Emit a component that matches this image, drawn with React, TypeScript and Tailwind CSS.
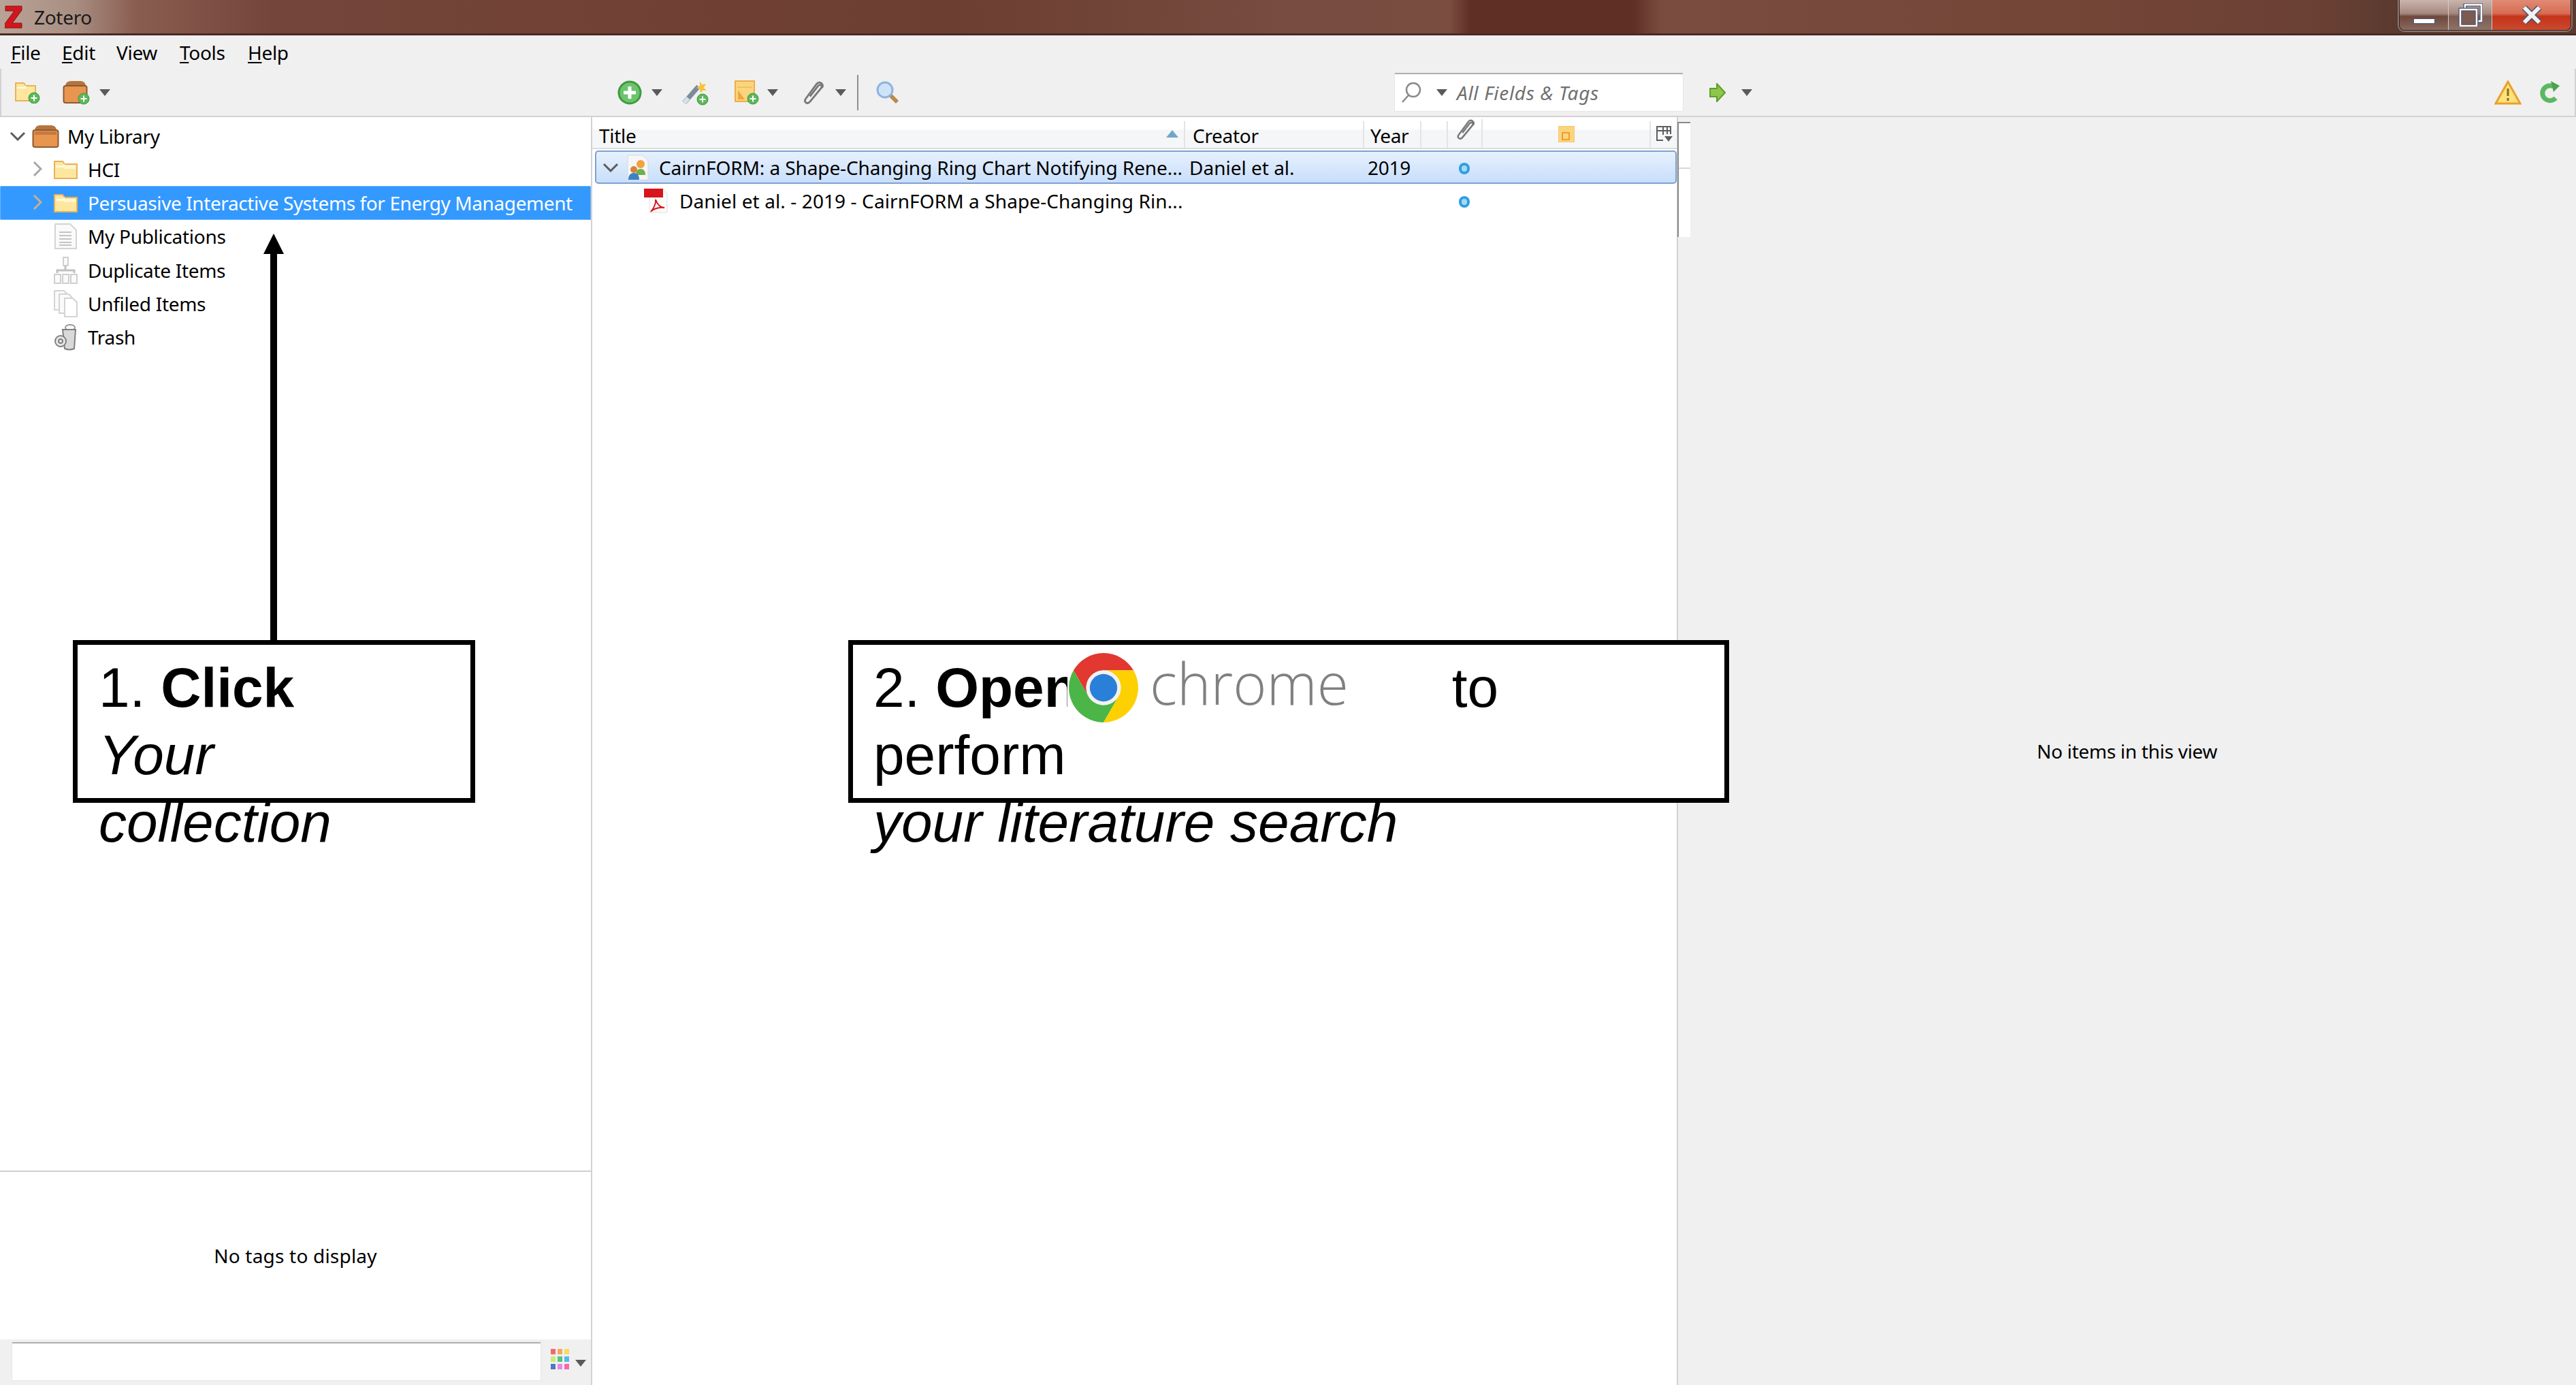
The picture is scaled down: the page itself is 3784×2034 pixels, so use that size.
const Caret = ({ className = '' }: { className?: string }) => (
  <svg viewBox="0 0 16 10" className={`w-[16px] h-[10px] ${className}`}>
    <path d="M0 0h16L8 10z" fill="#5a5a5a" />
  </svg>
);

const Chevron = ({ open, light, className = '' }: { open?: boolean; light?: boolean; className?: string }) =>
  open ? (
    <svg viewBox="0 0 24 14" className={`w-[24px] h-[14px] ${className}`}>
      <path d="M2 2l10 10L22 2" fill="none" stroke="#5c5c5c" strokeWidth="3" />
    </svg>
  ) : (
    <svg viewBox="0 0 14 22" className={`w-[14px] h-[22px] ${className}`}>
      <path d="M2 1l10 10L2 21" fill="none" stroke={light ? '#c8b090' : '#a8a8a8'} strokeWidth="3" />
    </svg>
  );

const PlusBadge = ({ cx, cy, r = 6 }: { cx: number; cy: number; r?: number }) => (
  <g>
    <circle cx={cx} cy={cy} r={r} fill="#5cb85c" stroke="#3f9a3f" />
    <path d={`M${cx - r * 0.55} ${cy}h${r * 1.1}M${cx} ${cy - r * 0.55}v${r * 1.1}`} stroke="#fff" strokeWidth="2" />
  </g>
);

const Folder = ({ className = '' }: { className?: string }) => (
  <svg viewBox="0 0 35 28" className={`w-[35px] h-[28px] ${className}`}>
    <path d="M1 2h12l3 4h18v21H1z" fill="#fde79f" stroke="#e8b25c" strokeWidth="2" />
    <path d="M3 8h10l3-3v6H3z" fill="#fff9e2" />
    <path d="M16 8h16v5H16z" fill="#fff6d0" />
  </svg>
);

const Box = ({ className = '' }: { className?: string }) => (
  <svg viewBox="0 0 40 34" className={className}>
    <path d="M4 8Q5 1 12 1h16q7 0 8 7z" fill="#b5743f" />
    <rect x="1.5" y="8" width="37" height="25" rx="3" fill="#e8954f" stroke="#8d5a30" strokeWidth="2" />
    <rect x="4" y="10" width="32" height="5" fill="#c67b3f" />
  </svg>
);

const Paperclip = ({ className = '' }: { className?: string }) => (
  <svg viewBox="0 0 24 24" className={className}>
    <path
      d="M9 16L17.500 5c2-2.500 5 0 3 2.500L9 21.500c-2.500 3-7 .5-4.500-3L16 3c3-3.500 8 0 5.500 4"
      fill="none"
      stroke="#787878"
      strokeWidth="2"
    />
  </svg>
);

const GreyPage = () => (
  <svg viewBox="0 0 35 40" className="w-[35px] h-[40px]">
    <path d="M2 2h22l9 9v27H2z" fill="#fafafa" stroke="#d4d4d4" strokeWidth="2" />
    <path d="M8 14h18M8 19h18M8 24h18M8 29h18M8 33h18" stroke="#c4c4c4" strokeWidth="2" />
  </svg>
);

const DuplicateIcon = () => (
  <svg viewBox="0 0 35 40" className="w-[35px] h-[40px]">
    <path d="M14 1h7v12h-7z" fill="#fafafa" stroke="#d0d0d0" strokeWidth="2" />
    <path d="M17 13v7M5 24v-4h25v4" fill="none" stroke="#c0c0c0" strokeWidth="3" />
    <path d="M1 26h9v13H1zM13 26h9v13h-9zM25 26h9v13h-9z" fill="#fafafa" stroke="#cfcfcf" strokeWidth="2" />
  </svg>
);

const UnfiledIcon = () => (
  <svg viewBox="0 0 35 40" className="w-[35px] h-[40px]">
    <path d="M1 1h14l4 4v24H1z" fill="#fafafa" stroke="#d4d4d4" strokeWidth="2" />
    <path d="M8 6h14l4 4v24H8z" fill="#fafafa" stroke="#d4d4d4" strokeWidth="2" />
    <path d="M16 12h12l6 6v21H16z" fill="#fff" stroke="#d4d4d4" strokeWidth="2" />
  </svg>
);

const TrashIcon = () => (
  <svg viewBox="0 0 35 40" className="w-[35px] h-[40px]">
    <ellipse cx="24" cy="6" rx="7" ry="4" fill="none" stroke="#9a9a9a" strokeWidth="2" />
    <path d="M13 9h19l-2 28q-7 3-14 0z" fill="#d9d9d9" stroke="#808080" strokeWidth="2" />
    <circle cx="10" cy="26" r="8" fill="#e8e8e8" stroke="#808080" strokeWidth="2" />
    <circle cx="10" cy="26" r="3" fill="none" stroke="#808080" strokeWidth="2" />
  </svg>
);

const ZoteroLogo = () => (
  <svg viewBox="0 0 26 34" className="w-[26px] h-[34px]">
    <path d="M1 1h24v6L11 26h14v7H0v-6L14 8H1z" fill="#d1171d" stroke="#8f1015" strokeWidth="1" />
  </svg>
);

const ChromeLogo = () => (
  <svg viewBox="0 0 100 100" className="w-[106px] h-[106px] shrink-0">
    <path d="M8.400 26A48 48 0 0 1 91.600 26H50A24 24 0 0 0 29.200 62Z" fill="#e2382f" />
    <path d="M8.400 26L29.200 62A24 24 0 0 0 70.800 62L50 98A48 48 0 0 1 8.400 26Z" fill="#4cb548" />
    <path d="M50 26H91.600A48 48 0 0 1 50 98L70.800 62A24 24 0 0 0 50 26Z" fill="#fdd000" />
    <circle cx="50" cy="50" r="24" fill="#f2f2f2" />
    <circle cx="50" cy="50" r="19" fill="#2a80d8" />
  </svg>
);

const menuItems = [
  { key: 'F', rest: 'ile', w: 'w-[75px]' },
  { key: 'E', rest: 'dit', w: 'w-[80px]' },
  { key: '', rest: 'View', w: 'w-[93px]' },
  { key: 'T', rest: 'ools', w: 'w-[100px]' },
  { key: 'H', rest: 'elp', w: 'w-[70px]' },
];

const collections = [
  { label: 'HCI', icon: <Folder />, chevron: true },
  { label: 'Persuasive Interactive Systems for Energy Management', icon: <Folder />, chevron: true, selected: true },
  { label: 'My Publications', icon: <GreyPage /> },
  { label: 'Duplicate Items', icon: <DuplicateIcon /> },
  { label: 'Unfiled Items', icon: <UnfiledIcon /> },
  { label: 'Trash', icon: <TrashIcon /> },
];

const Dot = ({ className = '' }: { className?: string }) => (
  <span className={`absolute left-[1273px] w-[16px] h-[17px] rounded-full border-[4px] border-[#2d9fe3] bg-[#a9d8f0] ${className}`} />
);

export default function App() {
  return (
    <div className="relative w-[3784px] h-[2034px] overflow-hidden flex flex-col bg-white text-black font-['Noto_Sans',sans-serif] text-[28px] tracking-[-0.3px]">
      {/* Title bar */}
      <header className="h-[52px] shrink-0 flex items-start border-b-[3px] border-[#4a2a24] bg-[linear-gradient(90deg,#b9a397_0px,#a98e82_110px,#8a5d51_200px,#74453a_400px,#6f4033_1000px,#6c3e32_1400px,#784c40_1900px,#7a4d41_2130px,#5f2f25_2160px,#5f2f25_2400px,#7a4c40_2440px,#744638_3000px,#6b4034_3400px,#5b3a30_3520px)]">
        <div className="flex items-center h-[49px] pl-[7px] gap-[17px]">
          <ZoteroLogo />
          <span className="text-[#1a1a1a]">Zotero</span>
        </div>
        <div className="ml-auto mr-[7px] flex h-[45px] w-[253px] rounded-b-[8px] border border-t-0 border-[#2e2420] shadow-[0_0_0_2px_rgba(255,255,255,0.3)] overflow-hidden">
          <div className="w-[72px] flex items-end justify-center pb-[9px] border-r border-[#d8c8c2] bg-[linear-gradient(180deg,#c9b5ae_0%,#a5887f_45%,#6e473c_55%,#8a6a60_100%)]">
            <span className="block w-[32px] h-[8px] bg-white border border-[#4a5570]" />
          </div>
          <div className="w-[64px] flex items-center justify-center border-r border-[#d8c8c2] bg-[linear-gradient(180deg,#c9b5ae_0%,#a5887f_45%,#7d5b50_55%,#8f7268_100%)]">
            <svg viewBox="0 0 36 34" className="w-[36px] h-[34px]">
              <rect x="10" y="2" width="24" height="24" fill="none" stroke="#4a5570" strokeWidth="5" />
              <rect x="10" y="2" width="24" height="24" fill="none" stroke="#fff" strokeWidth="2.500" />
              <rect x="3" y="9" width="24" height="24" fill="#7d5b50" stroke="#4a5570" strokeWidth="5" />
              <rect x="3" y="9" width="24" height="24" fill="none" stroke="#fff" strokeWidth="2.500" />
            </svg>
          </div>
          <div className="flex-1 flex items-center justify-center bg-[linear-gradient(180deg,#e08a74_0%,#d86c54_45%,#c4331a_55%,#c94a30_100%)]">
            <svg viewBox="0 0 30 28" className="w-[30px] h-[28px]">
              <path d="M4 3l22 22M26 3L4 25" stroke="#4a5570" strokeWidth="9" />
              <path d="M4 3l22 22M26 3L4 25" stroke="#f2f2f2" strokeWidth="6" />
            </svg>
          </div>
        </div>
      </header>

      {/* Menu bar */}
      <nav className="h-[49px] shrink-0 flex items-center pl-[16px] bg-[#f0f0f0]">
        {menuItems.map((item) => (
          <span key={item.rest} className={item.w}>
            <span className="underline underline-offset-[3px]">{item.key}</span>
            {item.rest}
          </span>
        ))}
      </nav>

      {/* Toolbar */}
      <div className="h-[71px] shrink-0 flex items-center bg-[#f0f0f0] border-b-[2px] border-x-[2px] border-[#d2d2d2] border-t-0">
        <svg viewBox="0 0 37 32" className="ml-[20px] w-[37px] h-[32px]">
          <path d="M1 2h12l3 4h14v22H1z" fill="#fde79f" stroke="#e8b25c" strokeWidth="2" />
          <path d="M3 8h10l3-3v5H3z" fill="#fff9e2" />
          <PlusBadge cx={28} cy={24} r={8} />
        </svg>
        <svg viewBox="0 0 40 36" className="ml-[33px] w-[40px] h-[36px]">
          <path d="M4 8Q5 1 12 1h14q7 0 8 7z" fill="#b5743f" />
          <rect x="1.500" y="8" width="34" height="25" rx="3" fill="#e8954f" stroke="#8d5a30" strokeWidth="2" />
          <PlusBadge cx={31} cy={27} r={8} />
        </svg>
        <Caret className="ml-[14px]" />

        {/* Item tools */}
        <svg viewBox="0 0 36 36" className="ml-[745px] w-[36px] h-[36px]">
          <circle cx="18" cy="18" r="16" fill="#6cc46c" stroke="#3f9a3f" strokeWidth="3" />
          <path d="M9 18h18M18 9v18" stroke="#fff" strokeWidth="5" />
        </svg>
        <Caret className="ml-[14px]" />
        <svg viewBox="0 0 40 38" className="ml-[29px] w-[40px] h-[38px]">
          <path d="M3 34L24 10" stroke="#7d8b99" strokeWidth="7" />
          <path d="M3 34l6-7" stroke="#d8e0e8" strokeWidth="6" />
          <path d="M26 2l3 5 6-1-3 6 4 4-6 0-3 4-1-6-5-2 5-3z" fill="#f4c542" />
          <PlusBadge cx={30} cy={29} r={8} />
        </svg>
        <svg viewBox="0 0 36 36" className="ml-[37px] w-[36px] h-[36px]">
          <rect x="1" y="1" width="28" height="30" fill="#fbd57e" stroke="#ecae4a" strokeWidth="2" />
          <path d="M4 10h22" stroke="#f3c060" strokeWidth="2" />
          <path d="M5 14l10 14H5z" fill="#f4a63c" />
          <PlusBadge cx={27} cy={27} r={8} />
        </svg>
        <Caret className="ml-[12px]" />
        <Paperclip className="ml-[34px] w-[34px] h-[34px]" />
        <Caret className="ml-[16px]" />
        <span className="ml-[16px] h-[52px] w-[2px] bg-[#8e8e8e]" />
        <svg viewBox="0 0 34 34" className="ml-[26px] w-[34px] h-[34px]">
          <path d="M20 20l11 11" stroke="#b98a4c" strokeWidth="6" />
          <circle cx="13" cy="13" r="11" fill="#cfe3f8" stroke="#8db4de" strokeWidth="3" />
        </svg>

        {/* Search */}
        <div className="ml-[727px] w-[425px] h-[57px] flex items-center bg-white border-t-[2px] border-[#aeaeae] border-x border-x-[#e6e6e6] border-b border-b-[#e6e6e6] rounded-[2px] pl-[9px]">
          <svg viewBox="0 0 30 32" className="w-[30px] h-[32px]">
            <circle cx="18" cy="12" r="10" fill="none" stroke="#8a8a8a" strokeWidth="2.500" />
            <path d="M11 20L2 30" stroke="#8a8a8a" strokeWidth="2.500" />
          </svg>
          <Caret className="ml-[22px]" />
          <span className="ml-[14px] italic text-[#707070] tracking-[0.7px]">All Fields &amp; Tags</span>
        </div>
        <svg viewBox="0 0 24 28" className="ml-[38px] w-[24px] h-[28px]">
          <path d="M1 8h10V1l12 13-12 13v-7H1z" fill="#8ec64a" stroke="#5f9e2c" strokeWidth="2" />
        </svg>
        <Caret className="ml-[23px]" />

        {/* Status icons */}
        <svg viewBox="0 0 40 36" className="ml-auto w-[40px] h-[36px]">
          <path d="M20 2L38 34H2z" fill="#fbe27a" stroke="#eaa02c" strokeWidth="3" />
          <path d="M20 12v11M20 26v4" stroke="#8f6a1a" strokeWidth="3" />
        </svg>
        <svg viewBox="0 0 32 36" className="ml-[26px] mr-[20px] w-[32px] h-[36px]">
          <path d="M24 26a11 11 0 1 1-3-17" fill="none" stroke="#5cb860" strokeWidth="7" />
          <path d="M17 1l13 7-9 9z" fill="#4aa34e" />
        </svg>
      </div>

      {/* Panes */}
      <main className="flex-1 min-h-0 flex">
        {/* Collections */}
        <aside className="w-[870px] shrink-0 flex flex-col border-r-[2px] border-[#d2d2d2]">
          <div className="flex-1 pt-[3px]">
            <div className="h-[49px] flex items-center">
              <Chevron open className="ml-[14px] mr-[9px] shrink-0" />
              <Box className="w-[40px] h-[34px] shrink-0" />
              <span className="ml-[12px]">My Library</span>
            </div>
            {collections.map((row) => (
              <div
                key={row.label}
                className={`relative h-[49.300px] flex items-center pl-[79px] ${
                  row.selected ? 'bg-[#3399ff] text-white outline-dotted outline-1 -outline-offset-1 outline-[#a8d0f8]' : ''
                }`}
              >
                {row.chevron && (
                  <Chevron light={row.selected} className="absolute left-[48px] top-[13px]" />
                )}
                <span className="w-[35px] flex justify-center shrink-0">{row.icon}</span>
                <span className={`ml-[15px] whitespace-nowrap ${row.selected ? 'tracking-[-0.4px]' : ''}`}>{row.label}</span>
              </div>
            ))}
          </div>

          {/* Tag selector */}
          <div className="h-[248px] shrink-0 flex items-center justify-center border-t-[2px] border-[#d0d0d0] tracking-[0.2px]">
            No tags to display
          </div>
          <div className="h-[67px] shrink-0 flex items-start bg-[#f0f0f0] pt-[4px] pl-[17px]">
            <div className="w-[778px] h-[57px] bg-white rounded-[2px] border-t-[2px] border-[#aeaeae] border-x border-x-[#e6e6e6] border-b border-b-[#e6e6e6]" />
            <svg viewBox="0 0 27 30" className="ml-[14px] mt-[10px] w-[27px] h-[30px]">
              {[
                ['#f4686c', '#f7a85c', '#f9dc5c'],
                ['#c6ec7c', '#52c878', '#58b8f0'],
                ['#4f78c0', '#e48ae0', '#f468b0'],
              ].map((colours, r) =>
                colours.map((fill, c) => (
                  <rect key={fill} x={c * 10} y={r * 11} width="7" height="8" fill={fill} />
                )),
              )}
            </svg>
            <Caret className="ml-[9px] mt-[26px]" />
          </div>
        </aside>

        {/* Items */}
        <section className="relative w-[1595px] shrink-0 border-r-[2px] border-[#d2d2d2]">
          <div className="h-[47px] flex border-b-[2px] border-[#dcdcdc] bg-[linear-gradient(180deg,#ffffff_0%,#ffffff_40%,#f5f6f7_42%,#f5f6f7_100%)] pt-[6px]">
            <div className="relative w-[871px] pl-[10px] border-r-[2px] border-[#e4e4e4]">
              Title
              <svg viewBox="0 0 18 11" className="absolute left-[843px] top-[13px] w-[18px] h-[11px]">
                <path d="M9 0l9 11H0z" fill="#6fa6c8" />
              </svg>
            </div>
            <div className="w-[263px] pl-[11px] border-r-[2px] border-[#e4e4e4]">Creator</div>
            <div className="w-[84px] pl-[9px] border-r-[2px] border-[#e4e4e4]">Year</div>
            <div className="w-[39px] border-r-[2px] border-[#e4e4e4]" />
            <div className="w-[51px] flex justify-center border-r-[2px] border-[#e4e4e4] -mt-[3px]">
              <Paperclip className="w-[30px] h-[30px]" />
            </div>
            <div className="w-[247px] flex items-center justify-center border-r-[2px] border-[#e4e4e4] pb-[2px]">
              <svg viewBox="0 0 24 24" className="w-[24px] h-[24px]">
                <rect x="0" y="0" width="24" height="24" fill="#fbd57e" stroke="#f3b85a" />
                <path d="M6 20V10h10v10z" fill="none" stroke="#f29c2c" strokeWidth="2" />
              </svg>
            </div>
            <div className="flex-1 flex items-center pl-[8px] pb-[2px]">
              <svg viewBox="0 0 24 24" className="w-[24px] h-[24px]">
                <path d="M1 12V1h20v11M1 1v20h9M1 7h20M10 1v12M16 1v11" fill="none" stroke="#5e5e5e" strokeWidth="2" />
                <path d="M12 15h12l-6 8z" fill="#5e5e5e" />
              </svg>
            </div>
          </div>

          <div className="relative mt-[2px] ml-[4px] w-[1589px] h-[49px] flex items-center rounded-[5px] border-[2px] border-[#7da2d0] bg-[linear-gradient(180deg,#e7f1fe_0%,#c8defa_100%)]">
            <Chevron open className="ml-[9px] w-[22px] shrink-0" />
            <svg viewBox="0 0 34 38" className="ml-[11px] w-[34px] h-[38px] shrink-0">
              <path d="M2 1h22l8 8v28H2z" fill="#f6f6f6" stroke="#d8d8d8" />
              <circle cx="21" cy="14" r="6" fill="#f2a13c" />
              <path d="M14 30q0-9 7-9t7 9z" fill="#6fb04f" />
              <circle cx="11" cy="22" r="5" fill="#d9823a" />
              <path d="M3 37q0-10 8-10t8 10z" fill="#3f80c4" />
            </svg>
            <span className="ml-[14px] whitespace-nowrap w-[779px] tracking-[-0.1px]">CairnFORM: a Shape-Changing Ring Chart Notifying Rene...</span>
            <span className="whitespace-nowrap w-[262px] tracking-[0px]">Daniel et al.</span>
            <span>2019</span>
          </div>
          <Dot className="top-[67px]" />
          <div className="h-[49px] flex items-center pl-[76px]">
            <svg viewBox="0 0 36 36" className="w-[36px] h-[36px] shrink-0">
              <path d="M8 1h20l6 6v28H8z" fill="#fafafa" stroke="#e0e0e0" />
              <rect x="0" y="0" width="28" height="13" fill="#d8141c" />
              <path d="M17 16c3 8 8 12 13 12-6-1-16 1-20 6 4-5 8-12 7-18z" fill="none" stroke="#d8141c" strokeWidth="2" />
            </svg>
            <span className="ml-[16px] whitespace-nowrap tracking-[0.1px]">Daniel et al. - 2019 - CairnFORM a Shape-Changing Rin...</span>
          </div>
          <Dot className="top-[116px]" />

          {/* Scrollbar stub */}
          <div className="absolute left-[1594px] top-[7px] w-[19px] h-[169px] bg-white border-l-[2px] border-t-[2px] border-[#8a8a8a]">
            <div className="mt-[65px] border-t-[2px] border-[#d8d8d8]" />
          </div>
        </section>

        {/* Item pane */}
        <section className="flex-1 flex items-center justify-center bg-[#f0f0f0]">
          No items in this view
        </section>
      </main>

      {/* Annotations */}
      <svg viewBox="0 0 30 597" className="absolute left-[387px] top-[343px] w-[30px] h-[597px]">
        <path d="M15 0l15 30H20v567H10V30H0z" fill="#000" />
      </svg>
      <div className="absolute left-[107px] top-[940px] w-[591px] h-[239px] border-[7px] border-black bg-white pt-[13px] pl-[31px] font-['Liberation_Sans',sans-serif] text-[82px] leading-[99px] tracking-normal">
        <p className="whitespace-nowrap">
          1. <strong className="font-bold">Click</strong>
        </p>
        <p className="italic w-[400px]">Your collection</p>
      </div>
      <div className="absolute left-[1246px] top-[940px] w-[1294px] h-[239px] border-[7px] border-black bg-white pt-[13px] pl-[30px] font-['Liberation_Sans',sans-serif] text-[82px] leading-[99px] tracking-normal">
        <p className="whitespace-nowrap">
          2. <strong className="font-bold">Open</strong>
          <span className="ml-[549px]">to</span>
        </p>
        <p>perform</p>
        <p className="italic whitespace-nowrap">your literature search</p>
        <div className="absolute left-[315px] top-[10px] w-[440px] flex items-start bg-white">
          <ChromeLogo />
          <span className="ml-[15px] font-['Open_Sans',sans-serif] font-[350] text-[#808080] text-[84px] leading-[106px] -mt-[7px]">chrome</span>
        </div>
      </div>
    </div>
  );
}
